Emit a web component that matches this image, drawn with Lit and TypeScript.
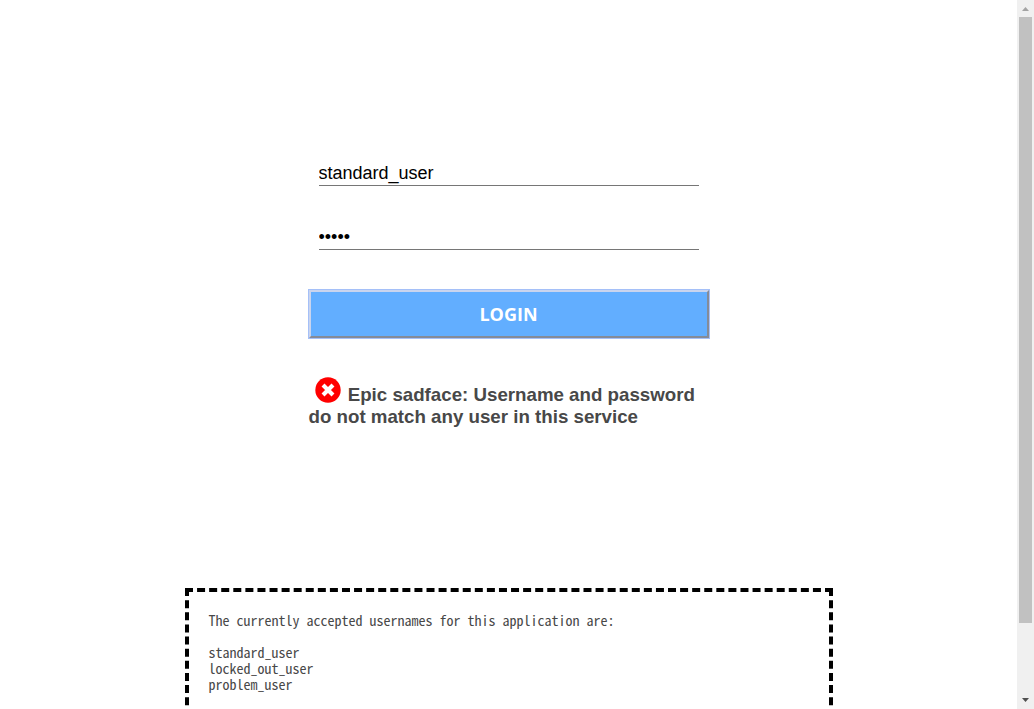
import { LitElement, html, css } from "lit";
import { customElement, state } from "lit/decorators.js";

@customElement("app-root")
export class AppRoot extends LitElement {
  @state() private usernames = ["standard_user", "locked_out_user", "problem_user"];

  static styles = css`
    :host {
      display: flex;
      height: 100vh;
      overflow: hidden;
      background: #fff;
      color: #484848;
      font-family: "Liberation Sans", Arial, sans-serif;
    }
    * {
      box-sizing: border-box;
    }
    .page {
      flex: 1;
      min-width: 0;
      display: flex;
      flex-direction: column;
      align-items: center;
      gap: 160px;
      padding: 160px 20px 0;
      overflow: hidden;
    }
    .login {
      display: flex;
      flex-direction: column;
      width: 100%;
      max-width: 400px;
    }
    .field {
      height: 26px;
      margin: 0 10px 38px;
      padding: 2px 0 0;
      border: 0;
      border-bottom: 1px solid #767676;
      border-radius: 0;
      outline: 0;
      background: transparent;
      color: #000;
      font-family: inherit;
      font-size: 18px;
    }
    .submit {
      height: 48px;
      margin-top: 2px;
      border: 2px solid;
      border-color: #c9d4ee #858b98 #858b98 #c9d4ee;
      border-radius: 0;
      outline: 1px solid #a5c0f8;
      outline-offset: 0;
      background: #62aeff;
      color: #fff;
      font-family: "Open Sans", sans-serif;
      font-size: 18px;
      font-weight: 700;
    }
    .error {
      margin: 39px 0 0;
      font-weight: 700;
      line-height: 22px;
    }
    .cross {
      width: 26px;
      height: 26px;
      margin: 0 2px 0 6px;
      vertical-align: -2px;
    }
    .credentials {
      flex: none;
      width: 100%;
      max-width: 648px;
      padding: 20px 20px 94px;
      border: 4px dashed #000;
      font-family: "Noto Sans Mono CJK SC", "Liberation Mono", monospace;
      font-size: 14px;
      line-height: 16px;
    }
    .credentials p {
      margin: 0 0 16px;
    }
    .credentials ul {
      margin: 0;
      padding: 0;
      list-style: none;
    }
    .scrollbar {
      flex: none;
      display: flex;
      flex-direction: column;
      align-items: center;
      width: 17px;
      background: #f0f0f0;
    }
    .arrow {
      flex: none;
      width: 17px;
      height: 17px;
    }
    .track {
      flex: 1;
      width: 13px;
    }
    .thumb {
      height: 89.8%;
      background: #c1c1c1;
    }
  `;

  render() {
    return html`
      <main class="page">
        <form class="login" @submit=${(e: Event) => e.preventDefault()}>
          <input class="field" type="text" aria-label="Username" .value=${"standard_user"} />
          <input class="field" type="password" aria-label="Password" .value=${"12345"} />
          <button class="submit" type="submit">LOGIN</button>
          <h3 class="error" role="alert">
            <svg class="cross" viewBox="0 0 512 512" aria-hidden="true">
              <circle cx="256" cy="256" r="250" fill="#f00" />
              <path
                d="M158 158 354 354M354 158 158 354"
                fill="none"
                stroke="#fff"
                stroke-width="82"
              />
            </svg>
            Epic sadface: Username and password do not match any user in this service
          </h3>
        </form>
        <section class="credentials">
          <p>The currently accepted usernames for this application are:</p>
          <ul>
            ${this.usernames.map((name) => html`<li>${name}</li>`)}
          </ul>
        </section>
      </main>
      <div class="scrollbar" aria-hidden="true">
        <svg class="arrow" viewBox="0 0 17 17"><path d="M5 11h7L8.500 7z" fill="#a3a3a3" /></svg>
        <div class="track"><div class="thumb"></div></div>
        <svg class="arrow" viewBox="0 0 17 17"><path d="M5 6h7L8.500 10z" fill="#505050" /></svg>
      </div>
    `;
  }
}
